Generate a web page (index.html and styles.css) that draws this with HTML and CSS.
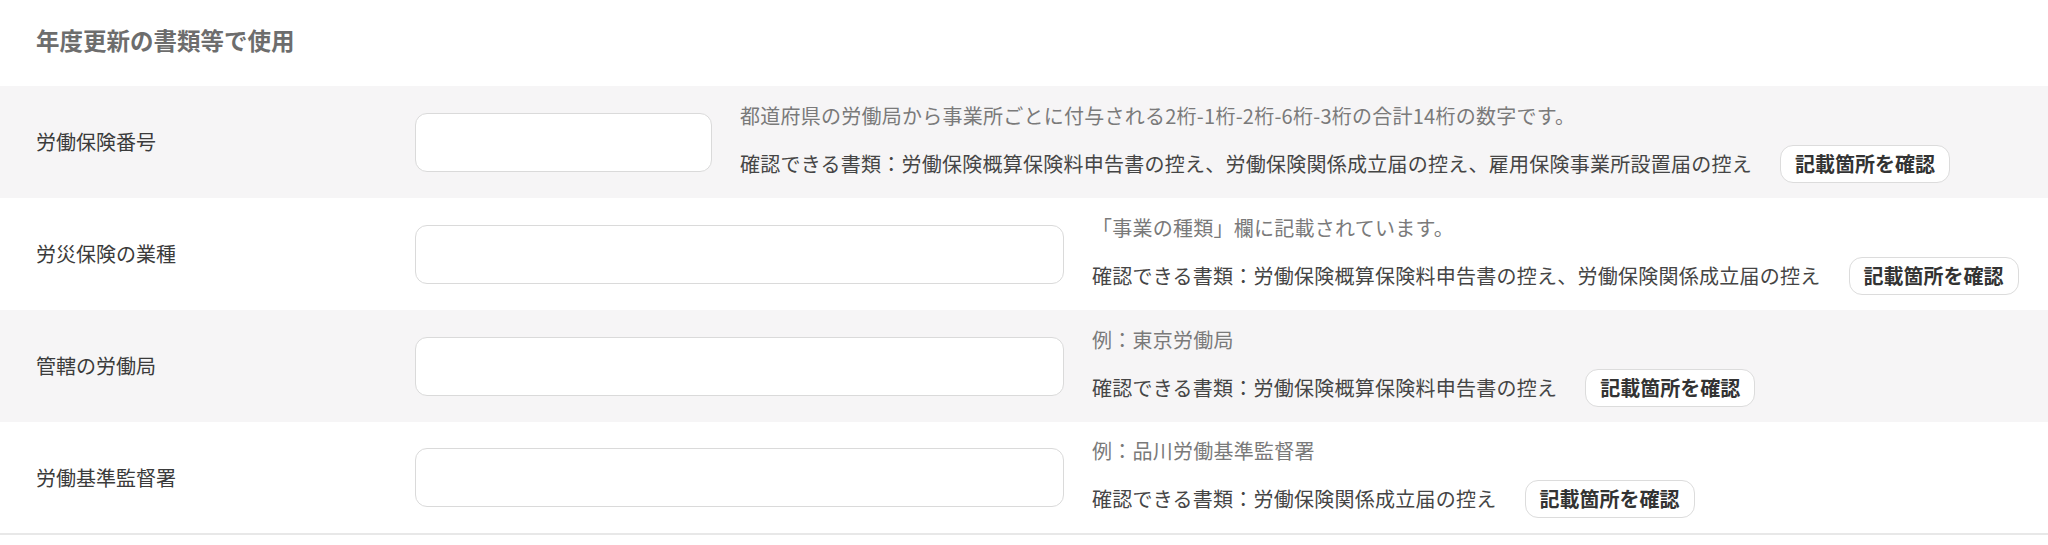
FILE: index.html
```html
<!DOCTYPE html>
<html lang="ja">
<head>
<meta charset="utf-8">
<title>年度更新の書類等で使用</title>
<link rel="stylesheet" href="styles.css">
</head>
<body>
<section class="card">
  <h2 class="title">年度更新の書類等で使用</h2>
  <div class="rows">
    <div class="row row--alt">
      <div class="label">労働保険番号</div>
      <input class="field field--narrow" type="text">
      <div class="desc">
        <p class="hint">都道府県の労働局から事業所ごとに付与される2桁-1桁-2桁-6桁-3桁の合計14桁の数字です。</p>
        <div class="docs"><span class="docs-text">確認できる書類：労働保険概算保険料申告書の控え、労働保険関係成立届の控え、雇用保険事業所設置届の控え</span><button class="btn" type="button">記載箇所を確認</button></div>
      </div>
    </div>
    <div class="row">
      <div class="label">労災保険の業種</div>
      <input class="field field--wide" type="text">
      <div class="desc">
        <p class="hint">「事業の種類」欄に記載されています。</p>
        <div class="docs"><span class="docs-text">確認できる書類：労働保険概算保険料申告書の控え、労働保険関係成立届の控え</span><button class="btn" type="button">記載箇所を確認</button></div>
      </div>
    </div>
    <div class="row row--alt">
      <div class="label">管轄の労働局</div>
      <input class="field field--wide" type="text">
      <div class="desc">
        <p class="hint">例：東京労働局</p>
        <div class="docs"><span class="docs-text">確認できる書類：労働保険概算保険料申告書の控え</span><button class="btn" type="button">記載箇所を確認</button></div>
      </div>
    </div>
    <div class="row row--last">
      <div class="label">労働基準監督署</div>
      <input class="field field--wide" type="text">
      <div class="desc">
        <p class="hint">例：品川労働基準監督署</p>
        <div class="docs"><span class="docs-text">確認できる書類：労働保険関係成立届の控え</span><button class="btn" type="button">記載箇所を確認</button></div>
      </div>
    </div>
  </div>
</section>
</body>
</html>
```

FILE: styles.css
```css
* {
  box-sizing: border-box;
}

html, body {
  margin: 0;
  padding: 0;
  background: #ffffff;
}

body {
  font-family: "Noto Sans CJK JP", "Noto Sans", sans-serif;
  color: #3a3a3a;
}

.card {
  width: 2048px;
}

.title {
  margin: 0;
  height: 86px;
  padding: 0 0 4px 36px;
  display: flex;
  align-items: center;
  font-size: 23.5px;
  font-weight: 700;
  color: #6d6d6d;
  line-height: 1;
}

.rows {
  display: flex;
  flex-direction: column;
  border-bottom: 2px solid #e8e8e8;
}

.row {
  height: 112px;
  display: flex;
  align-items: center;
  background: #ffffff;
}

.row--alt {
  background: #f6f5f6;
}

.row--last {
  height: 111px;
}

.label {
  width: 415px;
  flex: none;
  padding-left: 36px;
  font-size: 20px;
  line-height: 28px;
  color: #3b3b3b;
}

.field {
  flex: none;
  height: 59px;
  border: 1.5px solid #dadada;
  border-radius: 12px;
  background: #ffffff;
  font-family: inherit;
  font-size: 20px;
  padding: 0 16px;
  outline: none;
}

.field--narrow {
  width: 297px;
}

.field--wide {
  width: 649px;
}

.desc {
  margin-left: 28px;
  display: flex;
  flex-direction: column;
  gap: 15px;
  letter-spacing: 0.25px;
}

.hint {
  margin: 0;
  font-size: 20px;
  line-height: 28px;
  color: #7a7a7a;
}

.docs {
  display: flex;
  align-items: center;
  height: 38px;
}

.docs-text {
  font-size: 20px;
  line-height: 28px;
  color: #454545;
}

.btn {
  margin-left: 28px;
  height: 38px;
  padding: 0 14px;
  border: 1.5px solid #dcdcdc;
  border-radius: 13px;
  background: #ffffff;
  font-family: inherit;
  font-size: 20px;
  font-weight: 700;
  color: #333333;
  letter-spacing: 0;
  line-height: 1;
  cursor: pointer;
}
```
